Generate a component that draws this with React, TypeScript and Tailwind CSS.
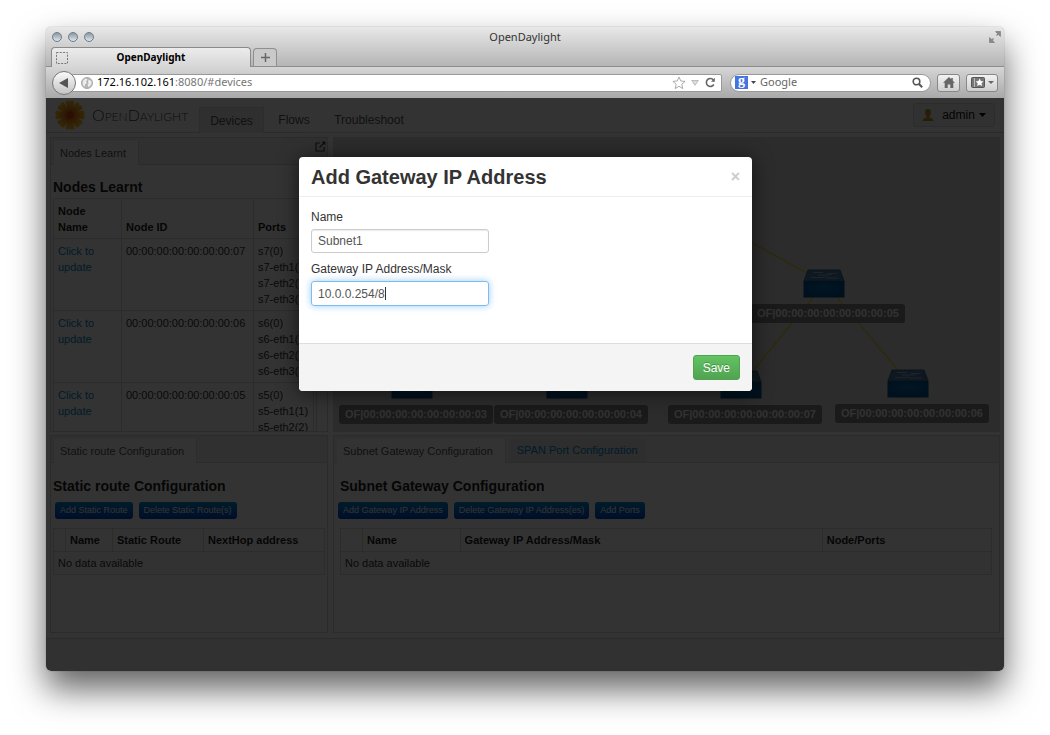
import React from "react";

const nodes = [
  { id: "00:00:00:00:00:00:00:07", ports: ["s7(0)", "s7-eth1(1)", "s7-eth2(2)", "s7-eth3(3)"] },
  { id: "00:00:00:00:00:00:00:06", ports: ["s6(0)", "s6-eth1(1)", "s6-eth2(2)", "s6-eth3(3)"] },
  { id: "00:00:00:00:00:00:00:05", ports: ["s5(0)", "s5-eth1(1)", "s5-eth2(2)"] },
];

const devices = [
  { label: "OF|00:00:00:00:00:00:00:05", x: 495, y: 132 },
  { label: "OF|00:00:00:00:00:00:00:03", x: 83, y: 233 },
  { label: "OF|00:00:00:00:00:00:00:04", x: 238, y: 233 },
  { label: "OF|00:00:00:00:00:00:00:07", x: 412, y: 233 },
  { label: "OF|00:00:00:00:00:00:00:06", x: 579, y: 232 },
];

function TrafficLight() {
  return (
    <span className="block size-[10px] rounded-full border border-[#6f7a85] bg-linear-to-b from-[#8b98a5] to-[#dfe8ef]" />
  );
}

function TitleBar() {
  return (
    <div className="grid h-5 grid-cols-3 items-center px-[6px]">
      <div className="flex gap-[6px]">
        <TrafficLight />
        <TrafficLight />
        <TrafficLight />
      </div>
      <div className="text-center text-[11px] text-[#333]">OpenDaylight</div>
      <svg className="-mr-[3px] size-3 justify-self-end" viewBox="0 0 12 12" fill="none" stroke="#888" strokeWidth="1.400">
        <path d="M7 1h4v4M11 1 7.500 4.500M5 11H1V7M1 11l3.500-3.500" />
        <path d="M7.500 1H11v3.500zM4.500 11H1V7.500z" fill="#888" />
      </svg>
    </div>
  );
}

function TabStrip() {
  return (
    <div className="flex h-5 items-end border-b border-[#8d8d8d] pl-[5px]">
      <div className="relative -mb-px flex h-5 w-[200px] items-center rounded-t border border-b-0 border-[#8a8a8a] bg-linear-to-b from-[#ececec] to-[#d6d6d6] px-1">
        <svg className="size-3 shrink-0" viewBox="0 0 12 12" fill="none" stroke="#777" strokeDasharray="2 1.300">
          <rect x="0.500" y="0.500" width="11" height="11" />
        </svg>
        <span className="w-full pr-3 text-center text-[10px] font-bold text-black">OpenDaylight</span>
      </div>
      <button aria-label="New tab" className="ml-[2px] grid h-[18px] w-6 place-items-center rounded-t border border-b-0 border-[#8f8f8f] bg-[#c9c9c9]">
        <svg className="size-[9px]" viewBox="0 0 9 9" stroke="#666" strokeWidth="1.500">
          <path d="M4.500 0v9M0 4.500h9" />
        </svg>
      </button>
    </div>
  );
}

function Toolbar() {
  return (
    <div className="flex h-[31px] items-center bg-linear-to-b from-[#d6d6d6] to-[#a9a9a9] px-[6px]">
      <button aria-label="Back" className="z-10 grid size-6 shrink-0 place-items-center rounded-full border border-[#777] bg-linear-to-b from-[#fafafa] to-[#c4c4c4]">
        <svg className="size-[10px]" viewBox="0 0 10 10" fill="#555"><path d="M0 5 9 0v10z" /></svg>
      </button>
      <div className="-ml-1 flex h-[18px] min-w-0 flex-1 items-center rounded-r-xs border border-[#999] bg-white pr-[5px] pl-2">
        <svg className="mr-1 size-3 shrink-0" viewBox="0 0 12 12">
          <circle cx="6" cy="6" r="5.500" fill="#b5b5b5" stroke="#aaa" />
          <path d="M1.500 6 2.500 3 5 1.500 6.500 2.500 5 4.500 5.800 6 4 7.500 3.500 10 2 8zM8 2.500 10.500 4.500 10.500 7 8.500 9.500 7.500 10 6.500 8 7.500 6.500 7 4.500z" fill="#eee" />
        </svg>
        <div className="flex-1 text-[11px] text-[#777]"><span className="text-black">172.16.102.161</span>:8080/#devices</div>
        <svg className="mr-[5px] size-[14px]" viewBox="0 0 14 14" fill="#fff" stroke="#aaa">
          <path d="M7 1l1.800 4 4.300.400-3.300 2.900 1 4.300L7 10.300l-3.800 2.300 1-4.300L.900 5.400l4.300-.400z" />
        </svg>
        <svg className="mr-[6px] h-[6px] w-2" viewBox="0 0 8 6" fill="#ddd" stroke="#bbb"><path d="M.7.500h6.600L4 5.300z" /></svg>
        <svg className="size-[11px]" viewBox="0 0 11 11" fill="none" stroke="#666" strokeWidth="1.600">
          <path d="M8.800 7.500A4 4 0 1 1 8.500 3" />
          <path d="M9.800.800v4H6z" fill="#666" stroke="none" />
        </svg>
      </div>
      <div className="ml-2 flex h-[18px] w-[201px] items-center rounded-full border border-[#999] bg-white px-1">
        <span className="grid size-[13px] shrink-0 place-items-center bg-[#4374e0] font-[Liberation_Serif,serif] text-[14px] leading-none font-bold text-white"><span className="-mt-1">g</span></span>
        <svg className="ml-[3px] h-[3px] w-[5px] shrink-0" viewBox="0 0 5 3" fill="#444"><path d="M0 0h5L2.500 3z" /></svg>
        <input aria-label="Search" placeholder="Google" className="ml-1 w-full min-w-0 bg-transparent text-[11px] outline-none placeholder:text-[#666]" />
        <svg className="mr-[3px] size-[11px] shrink-0" viewBox="0 0 11 11" fill="none" stroke="#555" strokeWidth="1.600">
          <circle cx="4.500" cy="4.500" r="3.300" /><path d="m7 7 3.200 3.200" strokeWidth="2" />
        </svg>
      </div>
      <button aria-label="Home" className="ml-[6px] grid h-[18px] w-[23px] place-items-center rounded-[3px] border border-[#888] bg-linear-to-b from-[#f2f2f2] to-[#cfcfcf]">
        <svg className="h-[11px] w-3" viewBox="0 0 12 11" fill="#666"><path d="M6 0 0 5.800h1.700V11h3V7.500h2.600V11h3V5.800H12L9.800 3.700V1H8.300v1.200z" /></svg>
      </button>
      <button aria-label="Bookmarks" className="ml-[6px] flex h-[18px] w-8 items-center justify-center gap-[3px] rounded-[3px] border border-[#888] bg-linear-to-b from-[#f2f2f2] to-[#cfcfcf]">
        <svg className="h-[11px] w-[14px]" viewBox="0 0 14 11">
          <rect x=".500" y=".500" width="13" height="10" rx="1" fill="#777" stroke="#555" />
          <path d="M3.500 1v9" stroke="#bbb" />
          <path d="m8.600 1.500 1.200 2.600 2.700.300-2 1.900.600 2.800-2.500-1.400-2.400 1.400.500-2.800-2-1.900 2.700-.300z" fill="#fff" />
        </svg>
        <svg className="h-[3px] w-[6px]" viewBox="0 0 6 3" fill="#666"><path d="M0 0h6L3 3z" /></svg>
      </button>
    </div>
  );
}

function Flower() {
  const petals = [0, 45, 90, 135, 180, 225, 270, 315];
  return (
    <svg className="size-8" viewBox="-16 -16 32 32">
      <defs>
        <radialGradient id="petal" gradientUnits="userSpaceOnUse" cx="0" cy="0" r="16">
          <stop offset="0.150" stopColor="#e2571a" />
          <stop offset="0.500" stopColor="#f3971c" />
          <stop offset="0.900" stopColor="#ffc425" />
        </radialGradient>
      </defs>
      {petals.map((a) => (
        <path key={a} d="M-1.500 0-4.500-13.500-1.600-15 0-13.400 1.600-15 4.500-13.500 1.500 0z" fill="url(#petal)" transform={`rotate(${a})`} />
      ))}
      <circle r="3.500" fill="#d9481c" />
    </svg>
  );
}

function AppHeader() {
  return (
    <header className="flex h-[35px] items-start border-b border-[#d4d4d4] pr-[9px] pl-2">
      <div className="mt-px"><Flower /></div>
      <div className="mt-[7px] ml-[6px] w-[97px] font-[Lato,sans-serif] text-[12px] leading-5 font-light whitespace-nowrap text-[#444]">
        <span className="text-[16px]">O</span>PEN<span className="text-[16px]">D</span>AYLIGHT
      </div>
      <nav className="mt-[9px] ml-[10px] flex h-[26px] text-[12px] text-[#555]">
        <a href="#devices" className="flex w-[65px] items-center justify-center border border-b-0 border-[#ddd] bg-[#e8e8e8]">Devices</a>
        <a href="#flows" className="flex w-[60px] items-center justify-center">Flows</a>
        <a href="#troubleshoot" className="flex w-[90px] items-center justify-center">Troubleshoot</a>
      </nav>
      <button className="mt-[5px] ml-auto flex h-6 w-[82px] items-center justify-center rounded-[3px] border border-[#dadada] bg-[#f5f5f5] text-[12px] text-[#111]">
        <svg className="mr-2 h-3 w-3" viewBox="0 0 12 12" fill="#c9962a">
          <path d="M6 0C3.800 0 3 1.800 3 3.600S4 7 4.700 7.500v1C2.500 9 .500 9.600.500 12h11c0-2.400-2-3-4.200-3.500v-1C8 7 9 5.400 9 3.600S8.200 0 6 0z" />
        </svg>
        admin
        <svg className="ml-1 h-1 w-[7px]" viewBox="0 0 7 4"><path d="M0 0h7L3.500 4z" /></svg>
      </button>
    </header>
  );
}

function PaneTabs({ tabs, icon }: { tabs: string[]; icon?: boolean }) {
  return (
    <div className="flex h-[27px] shrink-0 items-end gap-[3px] border-b border-[#d8d8d8] bg-[#f0f0f0] pr-px pl-[3px] text-[11px]">
      {tabs.map((t, i) => (
        <a
          key={t}
          href="#tab"
          className={
            i === 0
              ? "-mb-px flex h-6 items-center border-r border-[#ddd] bg-white pr-3 pl-[6px] text-[#555]"
              : "flex h-[23px] items-center bg-[#e4e4e4] px-2 text-[#0088cc]"
          }
        >
          {t}
        </a>
      ))}
      {icon && (
        <svg className="mb-3 ml-auto size-[11px]" viewBox="0 0 11 11" fill="none" stroke="#444" strokeWidth="1.200">
          <path d="M5 2H1v8h8V6M4.500 6.500 9.500 1.500" />
          <path d="M6.500.500h4v4z" fill="#444" stroke="none" />
        </svg>
      )}
    </div>
  );
}

function Pane({ tabs, icon, children }: { tabs: string[]; icon?: boolean; children: React.ReactNode }) {
  return (
    <section className="flex min-w-0 flex-col overflow-hidden border border-[#d8d8d8] bg-white">
      <PaneTabs tabs={tabs} icon={icon} />
      {children}
    </section>
  );
}

function NodesLearnt() {
  return (
    <Pane tabs={["Nodes Learnt"]} icon>
      <div className="mr-[10px] h-[266px] overflow-hidden border-r border-[#dadada] pl-[2px]">
        <h2 className="mt-3 mb-px text-[14px] leading-5 font-bold">Nodes Learnt</h2>
        <table className="w-[261px] table-fixed border-collapse text-[11px] leading-4 text-[#333]">
          <thead>
            <tr className="align-bottom">
              <th className="w-[68px] border border-[#ddd] px-1 pt-1 pb-[3px] text-left text-[#1c1c1c]">Node<br />Name</th>
              <th className="w-[132px] border border-[#ddd] px-1 pt-1 pb-[3px] text-left text-[#1c1c1c]">Node ID</th>
              <th className="border border-[#ddd] px-1 pt-1 pb-[3px] text-left text-[#1c1c1c]">Ports</th>
            </tr>
          </thead>
          <tbody>
            {nodes.map((n) => (
              <tr key={n.id} className="align-top">
                <td className="border border-[#ddd] px-1 pt-1 pb-[3px]"><a href="#update" className="text-[#0088cc]">Click to<br />update</a></td>
                <td className="border border-[#ddd] px-1 pt-1 pb-[3px] whitespace-nowrap">{n.id}</td>
                <td className="border border-[#ddd] px-1 pt-1 pb-[3px] whitespace-nowrap">
                  {n.ports.map((p) => <div key={p}>{p}</div>)}
                </td>
              </tr>
            ))}
          </tbody>
        </table>
      </div>
    </Pane>
  );
}

function SwitchIcon() {
  return (
    <svg className="-ml-[7px] h-[29px] w-[42px]" viewBox="0 0 42 29">
      <defs>
        <radialGradient id="front" cx="0.500" cy="0.400" r="0.600">
          <stop offset="0" stopColor="#0a6cb3" />
          <stop offset="1" stopColor="#005292" />
        </radialGradient>
      </defs>
      <path d="M5 1h32l4 11H1z" fill="#4a78a0" stroke="#2f6595" />
      <path d="M.5 12h41v16.500H.5z" fill="url(#front)" />
      <path d="M10 3.500h10M8 8.500h12l2-1M24 4.500h9l1-1M22 9h13M15 6h12l2-1" fill="none" stroke="#8fb0cc" />
    </svg>
  );
}

function Topology() {
  return (
    <section className="relative h-[295px] overflow-hidden bg-[#dcdcdc]">
      <svg className="absolute top-0 left-0 h-[295px] w-[667px]" viewBox="0 0 667 295" fill="none" stroke="#d9cf3c" strokeWidth="1.500">
        <path d="M325 54 492 146 576 246M492 146 409 247M325 54 158 146 80 247M158 146l77 101" />
      </svg>
      {devices.map((d) => (
        <div
          key={d.label}
          className="absolute flex w-[154px] -translate-x-1/2 flex-col items-center gap-[6px]"
          style={{ left: d.x, top: d.y }}
        >
          <SwitchIcon />
          <span className="flex h-[19px] w-full items-center justify-center rounded-[3px] bg-[#808080] text-[11px] font-bold whitespace-nowrap text-[#f8f8f8]">
            {d.label}
          </span>
        </div>
      ))}
    </section>
  );
}

function SmallButton({ children }: { children: React.ReactNode }) {
  return (
    <button className="h-[17px] rounded-[3px] bg-linear-to-b from-[#0088cc] to-[#0044cc] px-[5px] text-[9px] whitespace-nowrap text-white">
      {children}
    </button>
  );
}

function StaticRoutes() {
  return (
    <Pane tabs={["Static route Configuration"]}>
      <div className="px-[2px]">
        <h2 className="mt-[13px] text-[14px] leading-5 font-bold">Static route Configuration</h2>
        <div className="mt-[6px] mb-[9px] ml-[2px] flex gap-[6px]">
          <SmallButton>Add Static Route</SmallButton>
          <SmallButton>Delete Static Route(s)</SmallButton>
        </div>
        <table className="w-full table-fixed border-collapse text-[11px] leading-4 text-[#333]">
          <thead>
            <tr className="text-left text-[#1c1c1c]">
              <th className="w-3 border border-[#ddd]" />
              <th className="w-[47px] border border-[#ddd] px-1 py-[3px] whitespace-nowrap">Name</th>
              <th className="w-[91px] border border-[#ddd] px-1 py-[3px] whitespace-nowrap">Static Route</th>
              <th className="border border-[#ddd] px-1 py-[3px] whitespace-nowrap">NextHop address</th>
            </tr>
          </thead>
          <tbody>
            <tr><td colSpan={4} className="border border-[#ddd] bg-[#f9f9f9] px-1 py-[3px]">No data available</td></tr>
          </tbody>
        </table>
      </div>
    </Pane>
  );
}

function SubnetGateways() {
  return (
    <Pane tabs={["Subnet Gateway Configuration", "SPAN Port Configuration"]}>
      <div className="pr-[7px] pl-[6px]">
        <h2 className="mt-[13px] text-[14px] leading-5 font-bold">Subnet Gateway Configuration</h2>
        <div className="-ml-[2px] mt-[6px] mb-[9px] flex gap-[6px]">
          <SmallButton>Add Gateway IP Address</SmallButton>
          <SmallButton>Delete Gateway IP Address(es)</SmallButton>
          <SmallButton>Add Ports</SmallButton>
        </div>
        <table className="w-full table-fixed border-collapse text-[11px] leading-4 text-[#333]">
          <thead>
            <tr className="text-left text-[#1c1c1c]">
              <th className="w-[22px] border border-[#ddd]" />
              <th className="w-[15%] border border-[#ddd] px-1 py-[3px]">Name</th>
              <th className="border border-[#ddd] px-1 py-[3px]">Gateway IP Address/Mask</th>
              <th className="w-[26%] border border-[#ddd] px-1 py-[3px]">Node/Ports</th>
            </tr>
          </thead>
          <tbody>
            <tr><td colSpan={4} className="border border-[#ddd] bg-[#f9f9f9] px-1 py-[3px]">No data available</td></tr>
          </tbody>
        </table>
      </div>
    </Pane>
  );
}

function GatewayDialog() {
  return (
    <div role="dialog" aria-labelledby="dialog-title" className="w-[453px] overflow-hidden rounded-[4px] bg-white text-[12px] text-[#333] shadow-[0_2px_20px_rgba(0,0,0,0.6)]">
      <div className="flex h-10 items-center justify-between border-b border-[#eee] px-3">
        <h1 id="dialog-title" className="text-[20px] leading-6 font-bold">Add Gateway IP Address</h1>
        <button aria-label="Close" className="text-[16px] leading-4 font-bold text-[#ccc]">×</button>
      </div>
      <div className="flex w-[202px] flex-col px-3 pt-3 pb-[37px] leading-4">
        <label htmlFor="name">Name</label>
        <input id="name" defaultValue="Subnet1" className="mt-1 h-6 rounded-[3px] border border-[#ccc] px-[6px] text-[12px] text-[#555] inset-shadow-[0_1px_1px_rgba(0,0,0,0.08)] outline-none" />
        <label htmlFor="gateway" className="mt-2">Gateway IP Address/Mask</label>
        <div className="relative mt-1 flex">
          <input id="gateway" defaultValue="10.0.0.254/8" className="h-[25px] w-full rounded-[3px] border border-[#7cbdf0] px-[6px] text-[12px] text-[#555] shadow-[0_0_7px_rgba(82,168,236,0.6)] outline-none" />
          <span className="absolute top-[6px] left-[74px] h-[13px] w-px bg-[#333]" />
        </div>
      </div>
      <div className="flex h-12 items-center justify-end border-t border-[#ddd] bg-[#f4f4f4] px-3">
        <button className="h-[25px] rounded-[3px] border border-[#51a351] bg-linear-to-b from-[#62c462] to-[#51a351] px-[9px] text-white [text-shadow:0_-1px_0_rgba(0,0,0,0.25)]">Save</button>
      </div>
    </div>
  );
}

export default function App() {
  return (
    <div className="min-h-screen bg-white px-[46px] pt-[27px] pb-16">
      <div className="overflow-hidden rounded-[5px] shadow-[0_18px_34px_rgba(0,0,0,0.62),0_0_1px_rgba(0,0,0,0.6)]">
        <div className="font-[Noto_Sans,sans-serif]">
          <div className="bg-linear-to-b from-[#e8e8e8] to-[#b4b4b4]">
            <TitleBar />
            <TabStrip />
          </div>
          <Toolbar />
        </div>
        <div className="relative bg-white font-[Liberation_Sans,Arial,sans-serif] text-[#222]">
          <AppHeader />
          <main className="grid grid-cols-[5fr_12fr] gap-x-[5px] gap-y-[3px] px-1 pt-1 pb-[5px]">
            <NodesLearnt />
            <Topology />
            <StaticRoutes />
            <div className="grid min-h-[198px] min-w-0"><SubnetGateways /></div>
          </main>
          <footer className="h-[33px] border-t border-[#cfcfcf] bg-[#f5f5f5]" />
          <div className="absolute inset-0 flex items-start justify-center bg-black/80 pt-[59px] pl-px">
            <GatewayDialog />
          </div>
        </div>
      </div>
    </div>
  );
}
